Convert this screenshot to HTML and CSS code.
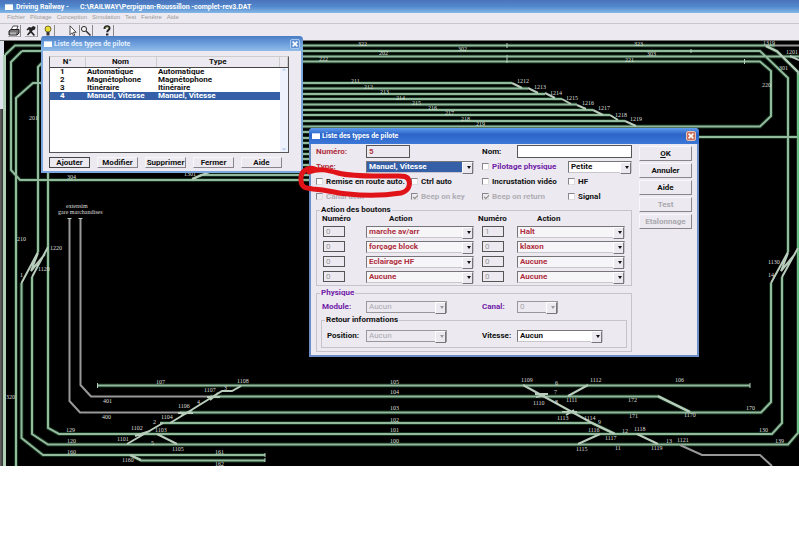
FILE: index.html
```html
<!DOCTYPE html>
<html lang="fr">
<head>
<meta charset="utf-8">
<title>Driving Railway</title>
<link rel="stylesheet" href="styles.css">
</head>
<body>
<div class="app">
  <header class="titlebar">
    <span class="win-icon"></span>
    <span class="app-name">Driving Railway -</span>
    <span>C:\RAILWAY\Perpignan-Roussillon -complet-rev3.DAT</span>
  </header>
  <nav class="menubar">
    <a href="#">Fichier</a><a href="#">Pilotage</a><a href="#">Conception</a><a href="#">Simulation</a><a href="#">Test</a><a href="#">Fenêtre</a><a href="#">Aide</a>
  </nav>
  <div class="toolbar">
    <button type="button" aria-label="Imprimer"><svg viewBox="0 0 12 12"><path d="M3 5 5 1h5L8.500 5z" fill="#fff" stroke="#222" stroke-width=".8"/><path d="M1 6 3 4.500h8V8L9 10H1z" fill="#777" stroke="#111" stroke-width=".9"/><path d="M2 8h6M2 9h6" stroke="#eee" stroke-width=".6"/></svg></button>
    <button type="button" aria-label="Outils"><svg viewBox="0 0 12 12"><path d="M1.500 4.500 4 2l2.500.5 1.500-1.500 2.500 1-.5 2.500-2.500 1-.5 1 3 3.500-1.200 1-3-3.300L3 10.500l-1-1 2.500-3L4 4.500 2.500 5.500z" fill="#222"/></svg></button>
    <button type="button" aria-label="Éclairage"><svg viewBox="0 0 12 12"><circle cx="6" cy="4" r="3" fill="#e8dc30" stroke="#555020" stroke-width=".8"/><path d="M4.500 7h3v3.500h-3z" fill="#333"/></svg></button>
    <span class="pair">
      <button type="button" aria-label="Sélection"><svg viewBox="0 0 12 12"><path d="M3 .800v9l2-2 1.500 3 1.300-.6L6.400 7.300h2.800z" fill="#fff" stroke="#222" stroke-width=".8"/></svg></button>
      <button type="button" aria-label="Zoom"><svg viewBox="0 0 12 12"><circle cx="4" cy="4" r="2.600" fill="#eee" stroke="#333"/><path d="m6 6 4.500 4.500" stroke="#333" stroke-width="1.600"/></svg></button>
    </span>
    <button type="button" class="help" aria-label="Aide"><svg viewBox="0 0 12 12"><path d="M3.500 4c0-4 5.500-3.500 5-.500C8.300 5 6.200 5 6.200 7.200" fill="none" stroke="#222" stroke-width="2"/><path d="M5 8.500h2.400v2H5z" fill="#222"/><path d="M4.200 3.500c.3-2 3.200-2 3.400-.300" fill="none" stroke="#c8c050" stroke-width=".7"/></svg></button>
  </div>

  <svg class="plan" viewBox="0 40 799 426" role="img" aria-label="Plan des voies">
    <defs>
      <linearGradient id="edge" x1="0" x2="1"><stop offset="0" stop-color="#666"/><stop offset="1" stop-color="#222"/></linearGradient>
      <path id="lines" d="M775 45.500H15L5 55M798 138V72L777 51.500 766 46M22 51H760L788 78V252M22 51 11 62V170L20 180H312M799 56.500H48L38 67V252M300 61.500H760L771 71V116L760 126.500H300M16 466V98L33 83H512M300 88.500H528M300 94H545M300 99H562M300 104.500H577M300 110H593M300 115H610M300 121H625M300 132H320M300 138H320M300 143H320M300 149H320M300 154H320M300 159H320M300 165H320M300 170H320M192 180 201 175H320M690 137H798V433L788 444.500H48L32 434V277M48 170V428L59 434H772L782 423V277M21.500 283V438L43 455H265M130 455 141 460.500H265M97 385.500H750M180 412.500H761L771 402V283M210 396.500H658L690 412M160 423H592L615 434"/>
      <path id="sidings" d="M69.500 218V401L80 412.500H182M80.500 218V385L91 396.500H212M775 45.500H799M680 445 702 455H760L772 466"/>
      <path id="points" d="M512 83 522 88M528 88 538 93M545 93 555 98M562 99 571 104M577 105 586 109M593 110 603 115M610 115 618 120M625 121 636 126M766 46 777 51 798 72M790 56 799 60M192 179 212 171M38 252 21.500 283M48 247 32 277M38 253 31 271 45 254M788 252 771 283M798 248 782 277M788 253 781 271 795 254M127 444 163 423M157 434 177 444M170 423 185 414 222 391H232L241 386M130 455 141 460M523 385 592 423 615 434M588 385 568 396M578 444 600 434M637 434 658 444M658 396 690 412M135 436 150 431M178 413H193M181 416 192 410M207 397H220M210 400 218 393M535 394H548M536 397 545 395M562 412H577M566 415 574 410"/>
    </defs>
    <rect y="40" width="799" height="426" fill="#000"/>
    <rect y="40" width="4" height="69" fill="#dfe3ee"/>
    <rect y="109" width="4" height="357" fill="url(#edge)"/>
    <path d="M0 40.500H799" stroke="#777"/>
    <use href="#lines" class="halo"/>
    <use href="#lines" class="rail"/>
    <path d="M4.500 55V466" class="border-rail"/>
    <path d="M798.500 75V433" class="bright-rail"/>
    <use href="#sidings" class="siding"/>
    <use href="#points" class="point"/>
    <path class="tick" d="M507 43v5M507 55v8M691 49v4M744.500 59v5M97.500 383v5M750 383v5M265 453v4M265 458v4M67.500 218.500h4M78.500 218.500h4"/>
    <g class="labels">
      <text x="358" y="46">322</text><text x="458" y="51">302</text><text x="379" y="55">202</text><text x="319" y="61">222</text>
      <text x="634" y="46">323</text><text x="647" y="56">303</text><text x="625" y="62">221</text><text x="763" y="45">1319</text><text x="786" y="54">1201</text><text x="779" y="70">301</text><text x="762" y="87">220</text>
      <text x="351" y="83">211</text><text x="364" y="89">212</text><text x="380" y="94">213</text><text x="396" y="100">214</text><text x="412" y="105">215</text><text x="428" y="110">216</text><text x="445" y="115">217</text><text x="461" y="121">218</text><text x="476" y="126">219</text>
      <text x="517" y="83">1212</text><text x="534" y="89">1213</text><text x="550" y="95">1214</text><text x="566" y="100">1215</text><text x="582" y="105">1216</text><text x="598" y="110">1217</text><text x="615" y="117">1218</text><text x="630" y="121">1219</text>
      <text x="29" y="120">201</text><text x="67" y="179">304</text><text x="184" y="176">1301</text>
      <text x="66" y="208">extensim</text><text x="58" y="214">gare marchandises</text>
      <text x="17" y="241">210</text><text x="50" y="250">1220</text><text x="38" y="271">1120</text><text x="20" y="277">1</text><text x="6" y="399">320</text>
      <text x="768" y="264">1130</text><text x="768" y="277">14</text>
      <text x="156" y="384">107</text><text x="237" y="383">1108</text><text x="204" y="392">1107</text><text x="224" y="390">3</text><text x="103" y="403">401</text><text x="197" y="404">4</text><text x="178" y="408">1106</text><text x="102" y="419">400</text><text x="161" y="419">1104</text><text x="153" y="424">2</text>
      <text x="66" y="432">129</text><text x="131" y="430">1102</text><text x="155" y="432">1103</text><text x="67" y="443">120</text><text x="117" y="441">1101</text><text x="151" y="445">5</text><text x="172" y="451">1105</text><text x="67" y="454">160</text><text x="122" y="462">1160</text><text x="215" y="454">161</text><text x="215" y="466">162</text>
      <text x="390" y="384">105</text><text x="390" y="394">104</text><text x="390" y="410">103</text><text x="390" y="422">102</text><text x="390" y="432">101</text><text x="390" y="443">100</text>
      <text x="521" y="382">1109</text><text x="555" y="385">6</text><text x="590" y="382">1112</text><text x="675" y="382">106</text><text x="554" y="394">7</text><text x="533" y="405">1110</text><text x="555" y="404">8</text><text x="566" y="402">1111</text><text x="628" y="402">172</text>
      <text x="557" y="420">1113</text><text x="584" y="420">1114</text><text x="598" y="424">9</text><text x="629" y="418">171</text><text x="684" y="417">1170</text><text x="746" y="410">170</text>
      <text x="588" y="432">1116</text><text x="605" y="440">1117</text><text x="622" y="433">12</text><text x="634" y="431">1118</text><text x="759" y="432">130</text><text x="576" y="451">1115</text><text x="615" y="450">11</text><text x="651" y="450">1119</text><text x="666" y="443">13</text><text x="677" y="442">1121</text><text x="775" y="443">139</text>
    </g>
  </svg>

  <section class="window list-window" aria-label="Liste des types de pilote">
    <header class="caption">
      <span class="win-icon"></span><h2>Liste des types de pilote</h2>
      <button type="button" class="close" aria-label="Fermer la liste"><svg viewBox="0 0 10 10"><path d="m2 2 6 6M8 2 2 8"/></svg></button>
    </header>
    <div class="list-body">
      <div class="listbox">
        <table>
          <thead><tr><th class="c-no">N°</th><th class="c-name">Nom</th><th>Type</th><th class="c-bar"></th></tr></thead>
          <tbody>
            <tr><td>1</td><td>Automatique</td><td>Automatique</td><td></td></tr>
            <tr><td>2</td><td>Magnétophone</td><td>Magnétophone</td><td></td></tr>
            <tr><td>3</td><td>Itinéraire</td><td>Itinéraire</td><td></td></tr>
            <tr class="selected"><td>4</td><td>Manuel, Vitesse</td><td>Manuel, Vitesse</td><td></td></tr>
          </tbody>
        </table>
        <div class="scrollbar"><span>⌃</span><span>⌄</span></div>
      </div>
      <div class="actions">
        <button type="button" class="btn default">Ajouter</button>
        <button type="button" class="btn">Modifier</button>
        <button type="button" class="btn">Supprimer</button>
        <button type="button" class="btn">Fermer</button>
        <button type="button" class="btn">Aide</button>
      </div>
    </div>
  </section>

  <section class="window edit-window" aria-label="Pilote">
    <header class="caption deep">
      <span class="win-icon"></span><h2>Liste des types de pilote</h2>
      <button type="button" class="close red" aria-label="Fermer la fenêtre"><svg viewBox="0 0 10 10"><path d="m2 2 6 6M8 2 2 8"/></svg></button>
    </header>
    <form class="edit-body">
      <div class="fields">
        <div class="grid">
          <label class="red-text" for="num">Numéro:</label>
          <input class="box w44 red-text" id="num" value="5">
          <label class="col4" for="nom">Nom:</label>
          <input class="box span2" id="nom">
          <label class="red-text" for="type">Type:</label>
          <span class="combo w107"><select class="navy" id="type"><option>Manuel, Vitesse</option></select></span>
          <label class="check col4 span2 purple-text"><input type="checkbox">Pilotage physique</label>
          <span class="combo"><select aria-label="Taille"><option>Petite</option></select></span>
          <label class="check span2"><input type="checkbox">Remise en route auto.</label>
          <label class="check col3"><input type="checkbox">Ctrl auto</label>
          <label class="check col4 span2"><input type="checkbox">Incrustation vidéo</label>
          <label class="check"><input type="checkbox">HF</label>
          <label class="check span2 off"><input type="checkbox" disabled>Canal actif</label>
          <label class="check col3 off"><input type="checkbox" checked disabled>Beep on key</label>
          <label class="check col4 span2 off"><input type="checkbox" checked disabled>Beep on return</label>
          <label class="check"><input type="checkbox">Signal</label>
        </div>

        <fieldset class="group">
          <legend>Action des boutons</legend>
          <div class="grid rows">
            <span class="head-no">Numéro</span><span class="head-act">Action</span><span class="head-no2">Numéro</span><span class="head-act2">Action</span>
            <input class="box num first" value="0" disabled aria-label="Numéro 1"><span class="combo w107"><select class="pale" aria-label="Action 1"><option>marche av/arr</option></select></span>
            <input class="box num col4" value="1" disabled aria-label="Numéro 2"><span class="combo w107"><select class="pale" aria-label="Action 2"><option>Halt</option></select></span>
            <input class="box num first" value="0" disabled aria-label="Numéro 3"><span class="combo w107"><select class="pale" aria-label="Action 3"><option>forçage block</option></select></span>
            <input class="box num col4" value="0" disabled aria-label="Numéro 4"><span class="combo w107"><select class="pale" aria-label="Action 4"><option>klaxon</option></select></span>
            <input class="box num first" value="0" disabled aria-label="Numéro 5"><span class="combo w107"><select class="pale" aria-label="Action 5"><option>Eclairage HF</option></select></span>
            <input class="box num col4" value="0" disabled aria-label="Numéro 6"><span class="combo w107"><select class="pale" aria-label="Action 6"><option>Aucune</option></select></span>
            <input class="box num first" value="0" disabled aria-label="Numéro 7"><span class="combo w107"><select class="pale" aria-label="Action 7"><option>Aucune</option></select></span>
            <input class="box num col4" value="0" disabled aria-label="Numéro 8"><span class="combo w107"><select class="pale" aria-label="Action 8"><option>Aucune</option></select></span>
          </div>
        </fieldset>

        <fieldset class="group physical">
          <legend class="purple-text">Physique</legend>
          <div class="grid">
            <label class="inset purple-text" for="module">Module:</label>
            <span class="combo w81 off"><select id="module" disabled><option>Aucun</option></select></span>
            <label class="col4 purple-text" for="canal">Canal:</label>
            <span class="combo w41 off"><select id="canal" disabled><option>0</option></select></span>
          </div>
          <fieldset class="group inner">
            <legend>Retour informations</legend>
            <div class="grid">
              <label class="inset" for="pos">Position:</label>
              <span class="combo w81 off"><select id="pos" disabled><option>Aucun</option></select></span>
              <label class="col4" for="vit">Vitesse:</label>
              <span class="combo w86"><select id="vit"><option>Aucun</option></select></span>
            </div>
          </fieldset>
        </fieldset>
      </div>
      <div class="side">
        <button type="button" class="btn"><u>O</u>K</button>
        <button type="button" class="btn">Annuler</button>
        <button type="button" class="btn">Aide</button>
        <button type="button" class="btn" disabled>Test</button>
        <button type="button" class="btn" disabled>Etalonnage</button>
      </div>
    </form>
  </section>

  <svg class="marker" viewBox="0 0 120 36" aria-hidden="true"><path d="M18 6C10 3 3 9 4 17c0 8 5 8 12 9 18 1 20 4 35 5 18 2 40 1 53-1 8-2 9-8 8-12-1-6-8-5-15-5-18 0-40 1-56-3C30 7 22 5 12 9"/></svg>
</div>
</body>
</html>
```
FILE: styles.css
```css
* { box-sizing: border-box; }

body {
  margin: 0;
  background: #fff;
  color: #111;
  font: bold 8px/10px "Roboto", sans-serif;
}

button, input, select { font: inherit; color: inherit; margin: 0; padding: 0; }
h2 { margin: 0; font: inherit; }
.app { position: relative; }

/* Main window */
.titlebar {
  display: flex;
  align-items: center;
  gap: 3px;
  height: 13px;
  padding-left: 5px;
  color: #fff;
  font-size: 7px;
  white-space: nowrap;
  background: linear-gradient(#4a74bc, #5288cc 50%, #84b8e8);
}
.app-name { width: 61px; }
.win-icon { width: 8px; height: 6px; background: #fff; border-top: 1px solid #bcd6f4; }
.menubar {
  display: flex;
  gap: 5px;
  height: 11px;
  padding-left: 7px;
  background: #eceaf0;
  border-bottom: 1px solid #c8c6cc;
  font: 6px/9px "Liberation Sans", sans-serif;
}
.menubar a { color: #999; text-decoration: none; }
.toolbar { display: flex; gap: 4px; height: 16px; padding: 1px 0 2px 8px; background: #eceaf0; }
.toolbar button {
  width: 13px;
  height: 12px;
  border: 0;
  border-right: 1px solid #888;
  border-bottom: 1px solid #aaa;
  background: none;
}
.pair { display: flex; margin-left: 8px; }
.help { margin-left: 4px; }
.toolbar svg { display: block; width: 12px; height: 12px; }

/* Track plan */
.plan { display: block; width: 100%; height: auto; }
.plan path, .plan use { fill: none; }
.halo { stroke: #14301c; stroke-width: 4; }
.rail { stroke: #94ba9e; stroke-width: 2; }
.border-rail { stroke: #b0d0b6; stroke-width: 3; }
.bright-rail { stroke: #5fbe78; stroke-width: 2; }
.siding { stroke: #98989a; stroke-width: 2; }
.point { stroke: #b8ccbc; stroke-width: 2; }
.tick { stroke: #b4d0ba; stroke-width: 1; }
.labels { fill: #ddd; font: 6px "Liberation Serif", serif; }

/* Floating windows */
.window {
  position: absolute;
  border: 2px solid #7ba6de;
  border-top: 0;
  border-radius: 4px 4px 0 0;
  background: #eceaf0;
}
.list-window { left: 41px; top: 36px; width: 262px; }
.edit-window { left: 309px; top: 128px; width: 390px; border-color: #6c8cc8; }
.caption {
  display: flex;
  align-items: center;
  gap: 2px;
  height: 15px;
  margin: 0 -2px;
  padding: 0 3px;
  border-radius: 4px 4px 0 0;
  color: #e4f0fc;
  font-size: 7px;
  background: linear-gradient(#4a7cc4, #6c9edc 50%, #90bce8);
}
.caption.deep { height: 16px; color: #fff; background: linear-gradient(#5c9cf0, #2c64c8 40%, #3c78d8); }
.close {
  width: 10px;
  height: 10px;
  margin-left: auto;
  border: 1px solid #a8c8f0;
  border-radius: 2px;
  background: #6090d0;
}
.close svg { display: block; width: 8px; height: 8px; fill: none; stroke: #fff; stroke-width: 2; }
.close.red { background: #c4705c; border-color: #e8c0b4; }

.btn {
  border: 1px solid;
  border-color: #f8f8fa #88868c #88868c #f8f8fa;
  background: #eceaf0;
  text-align: center;
}
.btn:disabled { color: #aaa8ae; }
.btn.default { border-color: #444; }

/* Pilot list */
.list-body { padding: 5px 12px 3px 6px; }
.listbox {
  position: relative;
  height: 97px;
  background: #fff;
  border: 1px solid #555;
  border-top-color: #ccc;
}
.listbox table { width: 100%; border-collapse: collapse; table-layout: fixed; }
.listbox th {
  height: 10px;
  padding: 0;
  line-height: 8px;
  background: #eceaf0;
  border-bottom: 1px solid #444;
  border-right: 1px solid #ccc;
}
.listbox td { padding: 0 0 0 2px; line-height: 8px; white-space: nowrap; }
.listbox td:first-child { padding-left: 10px; }
.c-no { width: 35px; }
.c-name { width: 71px; }
.c-bar { width: 8px; }
.selected td:not(:last-child) { background: #3560a8; color: #fff; }
.scrollbar {
  position: absolute;
  top: 11px;
  right: 0;
  bottom: 0;
  width: 8px;
  display: flex;
  flex-direction: column;
  justify-content: space-between;
  background: #eef2fc;
  color: #a8c0e8;
  font-size: 7px;
  line-height: 8px;
  text-align: center;
}
.actions { display: grid; grid-template-columns: repeat(5, 41px); gap: 7px; margin-top: 4px; }
.actions .btn { height: 11px; line-height: 9px; }

/* Pilot editor */
.edit-body { display: flex; gap: 7px; padding: 0 5px 3px; }
.fields { flex: 1; }
.side { display: flex; flex-direction: column; gap: 2px; width: 53px; padding-top: 2px; }
.side .btn { height: 15px; }
.grid {
  display: grid;
  grid-template-columns: 50px 45px 71px 35px 51px 64px;
  grid-auto-rows: 15px;
  align-items: center;
  white-space: nowrap;
}
.col3 { grid-column-start: 3; }
.col4 { grid-column-start: 4; }
.span2 { grid-column-end: span 2; }
.inset { padding-left: 6px; }
.red-text { color: #b03040; }
.purple-text { color: #7020a8; }
.check { display: flex; align-items: center; gap: 3px; }
.check input {
  appearance: none;
  width: 7px;
  height: 7px;
  border: 1px solid;
  border-color: #88868c #ddd #ddd #88868c;
  background: #fff;
}
.check.off { color: #b0aeb4; }
.check.off input { background: #eceaf0; }
.check input:checked::after {
  content: "";
  display: block;
  width: 4px;
  height: 2px;
  margin: 1px 0 0 1px;
  border: solid #888;
  border-width: 0 0 1px 1px;
  transform: rotate(-45deg);
}
.box { height: 13px; padding: 0 2px; border: 1px solid #555; background: #fff; min-width: 0; border-radius: 0; }
.w44 { width: 44px; background: #eceaf0; }
.num {
  width: 22px;
  height: 11px;
  background: #eceaf0;
  color: #999;
  font-weight: normal;
}
.num.first { grid-column-start: 1; margin-left: 7px; }
.combo { position: relative; display: block; height: 12px; }
.combo select {
  display: block;
  appearance: none;
  width: 100%;
  height: 12px;
  padding: 0 10px 0 2px;
  border: 1px solid;
  border-color: #77757a #c8c6cc #c8c6cc #77757a;
  border-radius: 0;
  background: #fff;
  color: #111;
}
.combo::before {
  content: "";
  position: absolute;
  top: 1px;
  right: 1px;
  width: 9px;
  height: 10px;
  background: #eceaf0;
  border: 1px solid;
  border-color: #fff #77757a #77757a #fff;
}
.combo::after {
  content: "";
  position: absolute;
  top: 5px;
  right: 3px;
  border: solid transparent;
  border-width: 3px 2px 0;
  border-top-color: #111;
}
.combo .navy { background: #3560a8; color: #fff; }
.combo .pale { background: #f6f5f8; color: #b03040; }
.combo.off select { background: #eceaf0; color: #aaa8ae; border-color: #99979c; opacity: 1; font-weight: normal; }
.combo.off::after { border-top-color: #999; }
.w107 { width: 108px; }
.w81 { width: 81px; }
.w41 { width: 41px; }
.w86 { width: 86px; }

.group {
  position: relative;
  min-width: 0;
  margin: 6px 0 0;
  padding: 4px 0 2px;
  border: 0;
  box-shadow: inset 0 0 0 1px #c6c4ca;
}
.group legend {
  position: absolute;
  top: -5px;
  left: 4px;
  padding: 0 1px;
  background: #eceaf0;
}
.rows { grid-template-rows: 10px; }
.head-no { padding-left: 6px; }
.head-act { padding-left: 23px; }
.head-no2 { grid-column-start: 4; margin-left: -4px; }
.head-act2 { padding-left: 20px; }
.physical { margin-top: 7px; padding: 6px 5px 4px; }
.physical > .grid { margin: 0 -5px; }
.inner { margin-top: 6px; padding: 8px 0 5px; }
.inner .grid { margin: 0 -5px; }
.inner .inset { padding-left: 11px; }

/* Hand-drawn highlight */
.marker { position: absolute; left: 297px; top: 163px; width: 120px; height: 36px; pointer-events: none; }
.marker path { fill: none; stroke: #e01418; stroke-width: 5; stroke-linecap: round; stroke-linejoin: round; }
```
